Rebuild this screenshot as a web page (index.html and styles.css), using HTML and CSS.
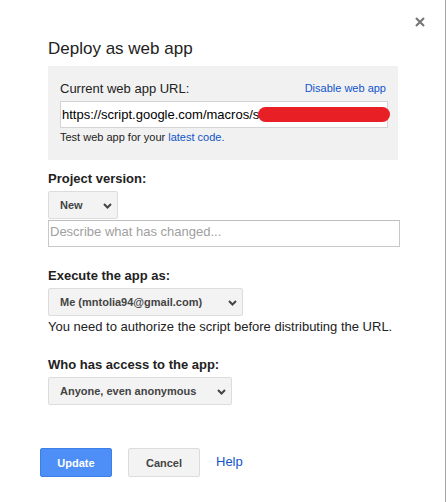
FILE: index.html
```html
<!DOCTYPE html>
<html lang="en">
<head>
<meta charset="utf-8">
<title>Deploy as web app</title>
<link rel="stylesheet" href="styles.css">
</head>
<body>
<div class="dialog">
  <button class="close" aria-label="Close">
    <svg width="10" height="10" viewBox="0 0 10 10"><path d="M1 1L9 9M9 1L1 9" stroke="#777" stroke-width="2.2" stroke-linecap="butt"/></svg>
  </button>
  <h1 class="title">Deploy as web app</h1>

  <div class="url-box">
    <div class="url-head">
      <span class="url-label">Current web app URL:</span>
      <a class="link small-link" href="#">Disable web app</a>
    </div>
    <div class="url-field">
      <div class="url-input">https://script.google.com/macros/s</div>
      <span class="redact"></span>
    </div>
    <div class="test-line">Test web app for your <a class="link" href="#">latest code.</a></div>
  </div>

  <div class="field first">
    <div class="label">Project version:</div>
    <div class="select sel-new"><span>New</span><svg class="chev" width="9" height="6" viewBox="0 0 9 6"><path d="M1 1L4.5 4.5L8 1" fill="none" stroke="#444" stroke-width="2"/></svg></div>
    <div class="describe">Describe what has changed...</div>
  </div>

  <div class="field">
    <div class="label">Execute the app as:</div>
    <div class="select sel-me"><span>Me (mntolia94@gmail.com)</span><svg class="chev" width="9" height="6" viewBox="0 0 9 6"><path d="M1 1L4.5 4.5L8 1" fill="none" stroke="#444" stroke-width="2"/></svg></div>
    <div class="note">You need to authorize the script before distributing the URL.</div>
  </div>

  <div class="field access">
    <div class="label">Who has access to the app:</div>
    <div class="select sel-anyone"><span>Anyone, even anonymous</span><svg class="chev" width="9" height="6" viewBox="0 0 9 6"><path d="M1 1L4.5 4.5L8 1" fill="none" stroke="#444" stroke-width="2"/></svg></div>
  </div>

  <div class="buttons">
    <button class="btn btn-primary">Update</button>
    <button class="btn btn-default">Cancel</button>
    <a class="link help" href="#">Help</a>
  </div>
</div>
</body>
</html>
```

FILE: styles.css
```css
* { box-sizing: border-box; }
html, body { margin: 0; padding: 0; background: #fff; }
body {
  font-family: "Liberation Sans", Arial, sans-serif;
  color: #222;
}
.dialog {
  position: relative;
  width: 446px;
  height: 502px;
  border-right: 1px solid #a3a3a3;
  padding: 39px 46px 0 48px;
}
.close {
  position: absolute;
  left: 415px;
  top: 17px;
  width: 11px;
  height: 11px;
  padding: 0;
  border: 0;
  background: none;
  display: flex;
}
.title {
  margin: 0 0 7px;
  font-size: 17px;
  line-height: 20px;
  font-weight: normal;
  color: #222;
}
.url-box {
  width: 350px;
  height: 94px;
  background: #f1f1f1;
  padding: 15px 10px 0 12px;
}
.url-head {
  display: flex;
  justify-content: space-between;
  align-items: flex-start;
}
.url-label {
  font-size: 13px;
  line-height: 16px;
}
.link { color: #15c; text-decoration: none; }
.small-link {
  font-size: 11px;
  line-height: 14px;
  margin-right: 2px;
}
.url-field {
  position: relative;
  margin-top: 4px;
}
.url-input {
  height: 27px;
  background: #fff;
  border: 1px solid #d4d4d4;
  font-size: 13px;
  line-height: 25px;
  padding: 0 1px;
  color: #000;
  white-space: nowrap;
  overflow: hidden;
}
.redact {
  position: absolute;
  left: 198px;
  top: 6px;
  width: 132px;
  height: 15px;
  border-radius: 8px;
  background: #e81f25;
}
.test-line {
  margin-top: 3px;
  font-size: 11px;
  line-height: 13px;
  color: #222;
}
.field { margin-top: 21px; }
.field.first { margin-top: 11px; }
.field.access { margin-top: 22px; }
.label {
  font-size: 13px;
  line-height: 16px;
  font-weight: bold;
  color: #222;
}
.select {
  margin-top: 4px;
  height: 28px;
  background: #f3f3f3;
  border: 1px solid #dcdcdc;
  border-radius: 2px;
  display: flex;
  align-items: center;
  justify-content: space-between;
  padding: 0 5px 0 11px;
  font-size: 11px;
  font-weight: bold;
  color: #444;
}
.chev { display: block; margin-top: 1px; }
.sel-new { width: 70px; }
.sel-me { width: 195px; }
.sel-anyone { width: 184px; }
.describe {
  margin-top: 1px;
  width: 352px;
  height: 27px;
  border: 1px solid #c8c8c8;
  border-top-color: #bdbdbd;
  padding: 3px 1px 0;
  font-size: 13px;
  line-height: 16px;
  color: #a0a0a0;
}
.note {
  margin-top: 3px;
  font-size: 13px;
  line-height: 16px;
  color: #222;
}
.buttons {
  margin: 43px 0 0 -8px;
  display: flex;
  align-items: center;
  gap: 16px;
}
.btn {
  height: 29px;
  width: 72px;
  border-radius: 2px;
  font-family: "Liberation Sans", Arial, sans-serif;
  font-size: 11px;
  font-weight: bold;
  padding: 0;
}
.btn-primary {
  background: #4d8ff6;
  border: 1px solid #3d7fe8;
  color: #fff;
}
.btn-default {
  background: #f3f3f3;
  border: 1px solid #dcdcdc;
  color: #444;
}
.help {
  font-size: 13px;
  line-height: 16px;
  margin-top: -1px;
}
```
